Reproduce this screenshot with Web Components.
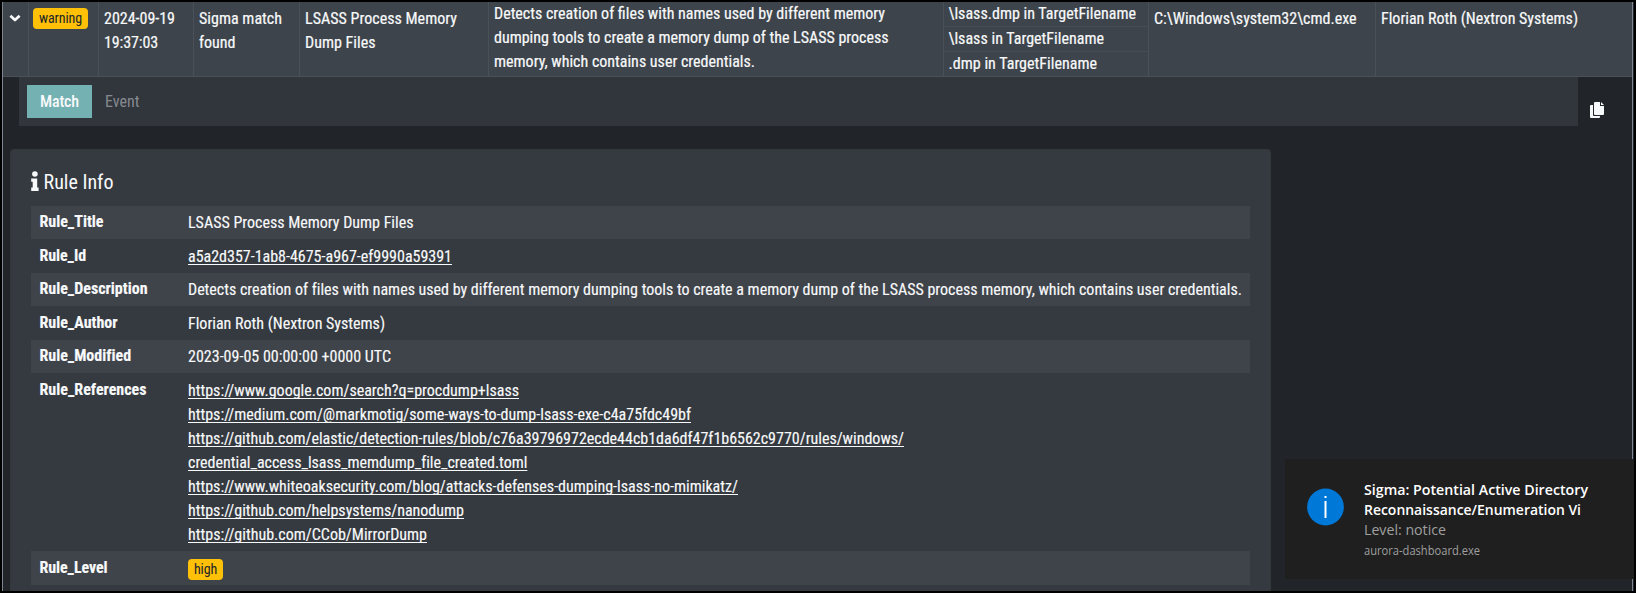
<!DOCTYPE html>
<html lang="en">
<head>
<meta charset="utf-8">
<title>Aurora Dashboard</title>
<style>
  html, body { margin: 0; height: 100%; background: #000; overflow: hidden; }
  body { font-family: "Roboto Condensed", Roboto, sans-serif; font-stretch: 75%; font-weight: 400; font-size: 16px; line-height: 24px; color: #f8f9fa; }
</style>
</head>
<body>
<aurora-app></aurora-app>
<script>
const define = (name, html, setup) => {
  const template = document.createElement('template');
  template.innerHTML = html;
  customElements.define(name, class extends HTMLElement {
    constructor() {
      super();
      this.attachShadow({ mode: 'open' }).append(template.content.cloneNode(true));
    }
    connectedCallback() { if (setup) setup(this, this.shadowRoot); }
  });
};

/* One line of condensed text, set to the measure given by its "w" attribute. */
define('text-line', `
  <style>
    :host { display: block; white-space: nowrap; }
    span { display: inline-block; transform-origin: 0 0; white-space: pre; vertical-align: top; }
    :host([link]) span { text-decoration: underline; text-decoration-thickness: 1px; text-underline-offset: 2px; text-decoration-skip-ink: none; }
  </style><span><slot></slot></span>`,
  (host, root) => {
    const w = +host.getAttribute('w');
    if (!w) return;
    host.style.width = w + 'px';
    const span = root.querySelector('span');
    const natural = span.getBoundingClientRect().width;
    if (Math.abs(w / natural - 1) < 0.035) span.style.letterSpacing = (w - natural) / host.textContent.length + 'px';
    else span.style.transform = `scaleX(${w / natural})`;
  });

define('level-badge', `
  <style>
    :host { display: block; box-sizing: border-box; width: max-content; height: 21px; padding: 0 6px; border-radius: 4px; background: #ffc107; color: #212529; font-size: 14px; line-height: 21px; -webkit-text-stroke: 0; }
  </style><slot></slot>`);

define('event-cell', `
  <style>
    :host { display: block; box-sizing: border-box; padding: 5px 0 0 5px; border-left: 1px solid #495057; }
    :host([first]) { border-left: 0; }
    :host([flush]) { padding-top: 0; }
  </style><slot></slot>`);

define('match-list', `
  <style>
    :host { display: block; box-sizing: border-box; border-left: 1px solid #495057; }
    ::slotted(*) { height: 24px; padding-left: 4.5px; border-bottom: 1px solid #454c54; }
    ::slotted(:last-child) { border-bottom: 0; }
  </style><slot></slot>`);

define('event-row', `
  <style>
    :host { display: grid; grid-template-columns: 25px 70px 95px 106px 189px 455px 205px 227px 1fr; height: 74px; background: #3d444b; border-bottom: 1px solid #495057; -webkit-text-stroke: .2px; }
    .toggle { padding: 12px 0 0 6px; line-height: 0; }
    level-badge { margin: 1px 0 0 -1px; }
    match-list text-line { width: auto !important; }
  </style>
  <event-cell first style="padding:0"><div class="toggle"><svg width="12" height="9" viewBox="0 0 12 9"><path d="M1.4 1.7 6 6 10.6 1.7" fill="none" stroke="#f8f9fa" stroke-width="2.7" stroke-linejoin="round"/></svg></div></event-cell>
  <event-cell><level-badge><text-line w="43">warning</text-line></level-badge></event-cell>
  <event-cell><text-line w="71">2024-09-19</text-line><text-line w="54">19:37:03</text-line></event-cell>
  <event-cell><text-line w="83">Sigma match</text-line><text-line w="36.5">found</text-line></event-cell>
  <event-cell><text-line w="152">LSASS Process Memory</text-line><text-line w="70.5">Dump Files</text-line></event-cell>
  <event-cell flush>
    <text-line w="391">Detects creation of files with names used by different memory</text-line>
    <text-line w="394.5">dumping tools to create a memory dump of the LSASS process</text-line>
    <text-line w="261">memory, which contains user credentials.</text-line>
  </event-cell>
  <match-list>
    <text-line w="187.5">\\lsass.dmp in TargetFilename</text-line>
    <text-line w="155.5">\\lsass in TargetFilename</text-line>
    <text-line w="148.5">.dmp in TargetFilename</text-line>
  </match-list>
  <event-cell><text-line w="202.5">C:\\Windows\\system32\\cmd.exe</text-line></event-cell>
  <event-cell><text-line w="197">Florian Roth (Nextron Systems)</text-line></event-cell>`);

define('tab-bar', `
  <style>
    :host { display: flex; margin: 0 54px 0 16px; height: 49px; }
    nav { box-sizing: border-box; display: flex; flex: 1; padding: 8px; background: #31353c; }
    .tab { box-sizing: border-box; height: 33px; padding: 5px 13px 0; color: #868a90; }
    .active { background: #74b1b3; color: #f8f9fa; font-weight: 500; }
    .copy { width: 0; overflow: visible; }
    svg { display: block; margin: 25px 0 0 12px; }
  </style>
  <nav><div class="tab active"><text-line w="39">Match</text-line></div><div class="tab"><text-line w="34.5">Event</text-line></div></nav>
  <div class="copy"><svg width="14" height="16" viewBox="0 0 14 16" fill="#f8f9fa"><path d="M0 4q0-1 1-1H3v10q0 1 1 1h6v1q0 1-1 1H1q-1 0-1-1Z"/><path d="M4 1q0-1 1-1h5v4h4v8q0 1-1 1H5q-1 0-1-1Z"/><path d="M11 0l3 3h-3Z"/></svg></div>`);

define('rule-field', `
  <style>
    :host { display: grid; grid-template-columns: 148px 1fr; box-sizing: border-box; padding: 5.4px 0 4.2px 9px; color: #f8f9fa; -webkit-text-stroke: .15px; }
    :host([striped]) { background: #3f434a; }
    .key { font-weight: 700; margin: -.9px 0 0 -.5px; height: 24px; }
  </style><div class="key"><slot name="key"></slot></div><div><slot></slot></div>`);

define('rule-card', `
  <style>
    :host { display: block; box-sizing: border-box; width: 1261px; height: 442px; margin: 23px 0 0 7px; border: 1px solid #32373a; border-bottom: 0; border-radius: 4px 4px 0 0; background: #353940; padding: 20px 20px 0; overflow: hidden; }
    header { display: flex; gap: 4.5px; height: 35.6px; font-size: 20px; line-height: 24px; }
    svg { display: block; margin-top: 1px; }
    level-badge { margin: 2.4px 0 .6px; }
  </style>
  <header><svg width="8" height="20" viewBox="0 0 8 20" fill="#f8f9fa"><circle cx="3.9" cy="3" r="2.8"/><path d="M.2 7.4h6v9.2H7.6v3.4H.2v-3.4H1.7v-5.8H.2Z"/></svg><text-line w="70">Rule Info</text-line></header>
  <rule-field striped><text-line slot="key" w="64">Rule_Title</text-line><text-line w="225.5">LSASS Process Memory Dump Files</text-line></rule-field>
  <rule-field><text-line slot="key" w="46.5">Rule_Id</text-line><text-line link w="264">a5a2d357-1ab8-4675-a967-ef9990a59391</text-line></rule-field>
  <rule-field striped><text-line slot="key" w="108">Rule_Description</text-line><text-line w="1053">Detects creation of files with names used by different memory dumping tools to create a memory dump of the LSASS process memory, which contains user credentials.</text-line></rule-field>
  <rule-field><text-line slot="key" w="78">Rule_Author</text-line><text-line w="197">Florian Roth (Nextron Systems)</text-line></rule-field>
  <rule-field striped><text-line slot="key" w="91">Rule_Modified</text-line><text-line w="203">2023-09-05 00:00:00 +0000 UTC</text-line></rule-field>
  <rule-field><text-line slot="key" w="107">Rule_References</text-line>
    <text-line link w="331">https://www.google.com/search?q=procdump+lsass</text-line>
    <text-line link w="503">https://medium.com/@markmotig/some-ways-to-dump-lsass-exe-c4a75fdc49bf</text-line>
    <text-line link w="716">https://github.com/elastic/detection-rules/blob/c76a39796972ecde44cb1da6df47f1b6562c9770/rules/windows/</text-line>
    <text-line link w="338.5">credential_access_lsass_memdump_file_created.toml</text-line>
    <text-line link w="550">https://www.whiteoaksecurity.com/blog/attacks-defenses-dumping-lsass-no-mimikatz/</text-line>
    <text-line link w="276">https://github.com/helpsystems/nanodump</text-line>
    <text-line link w="239">https://github.com/CCob/MirrorDump</text-line>
  </rule-field>
  <rule-field striped><text-line slot="key" w="68">Rule_Level</text-line><level-badge><text-line w="23">high</text-line></level-badge></rule-field>`);

define('toast-message', `
  <style>
    :host { position: absolute; left: 1285px; top: 459px; width: 349px; height: 120px; box-sizing: border-box; display: flex; gap: 20.5px; padding: 20px 0 0 21.5px; background: #1f1f1f; color: #fff; font-family: "Open Sans", "Noto Sans", sans-serif; font-stretch: 100%; font-size: 15px; line-height: 20px; }
    svg { display: block; margin-top: 9px; flex: none; }
    .title { font-weight: 600; }
    .level { color: #9f9f9f; }
    .app { color: #9f9f9f; font-size: 12px; line-height: 24px; }
  </style>
  <svg width="37" height="38" viewBox="0 0 37 38"><circle cx="18.5" cy="19" r="18.4" fill="#0078d7"/><path d="M17.5 8h2v2h-2ZM17.5 13h2v17h-2Z" fill="#fff"/></svg>
  <div>
    <div class="title"><text-line w="224">Sigma: Potential Active Directory</text-line><text-line w="217">Reconnaissance/Enumeration Vi</text-line></div>
    <div class="level"><text-line w="82">Level: notice</text-line></div>
    <div class="app"><text-line w="116">aurora-dashboard.exe</text-line></div>
  </div>`);

define('aurora-app', `
  <style>
    :host { display: block; position: relative; box-sizing: border-box; width: 1636px; height: 593px; padding: 2px; background: #000; overflow: hidden; }
    main { box-sizing: border-box; width: 1631px; height: 589px; border: solid #7c8590; border-width: 0 1px; background: #212529; overflow: hidden; box-shadow: 1px 0 #212529; }
  </style>
  <main><event-row></event-row><tab-bar></tab-bar><rule-card></rule-card></main>
  <toast-message></toast-message>`);
</script>
</body>
</html>
